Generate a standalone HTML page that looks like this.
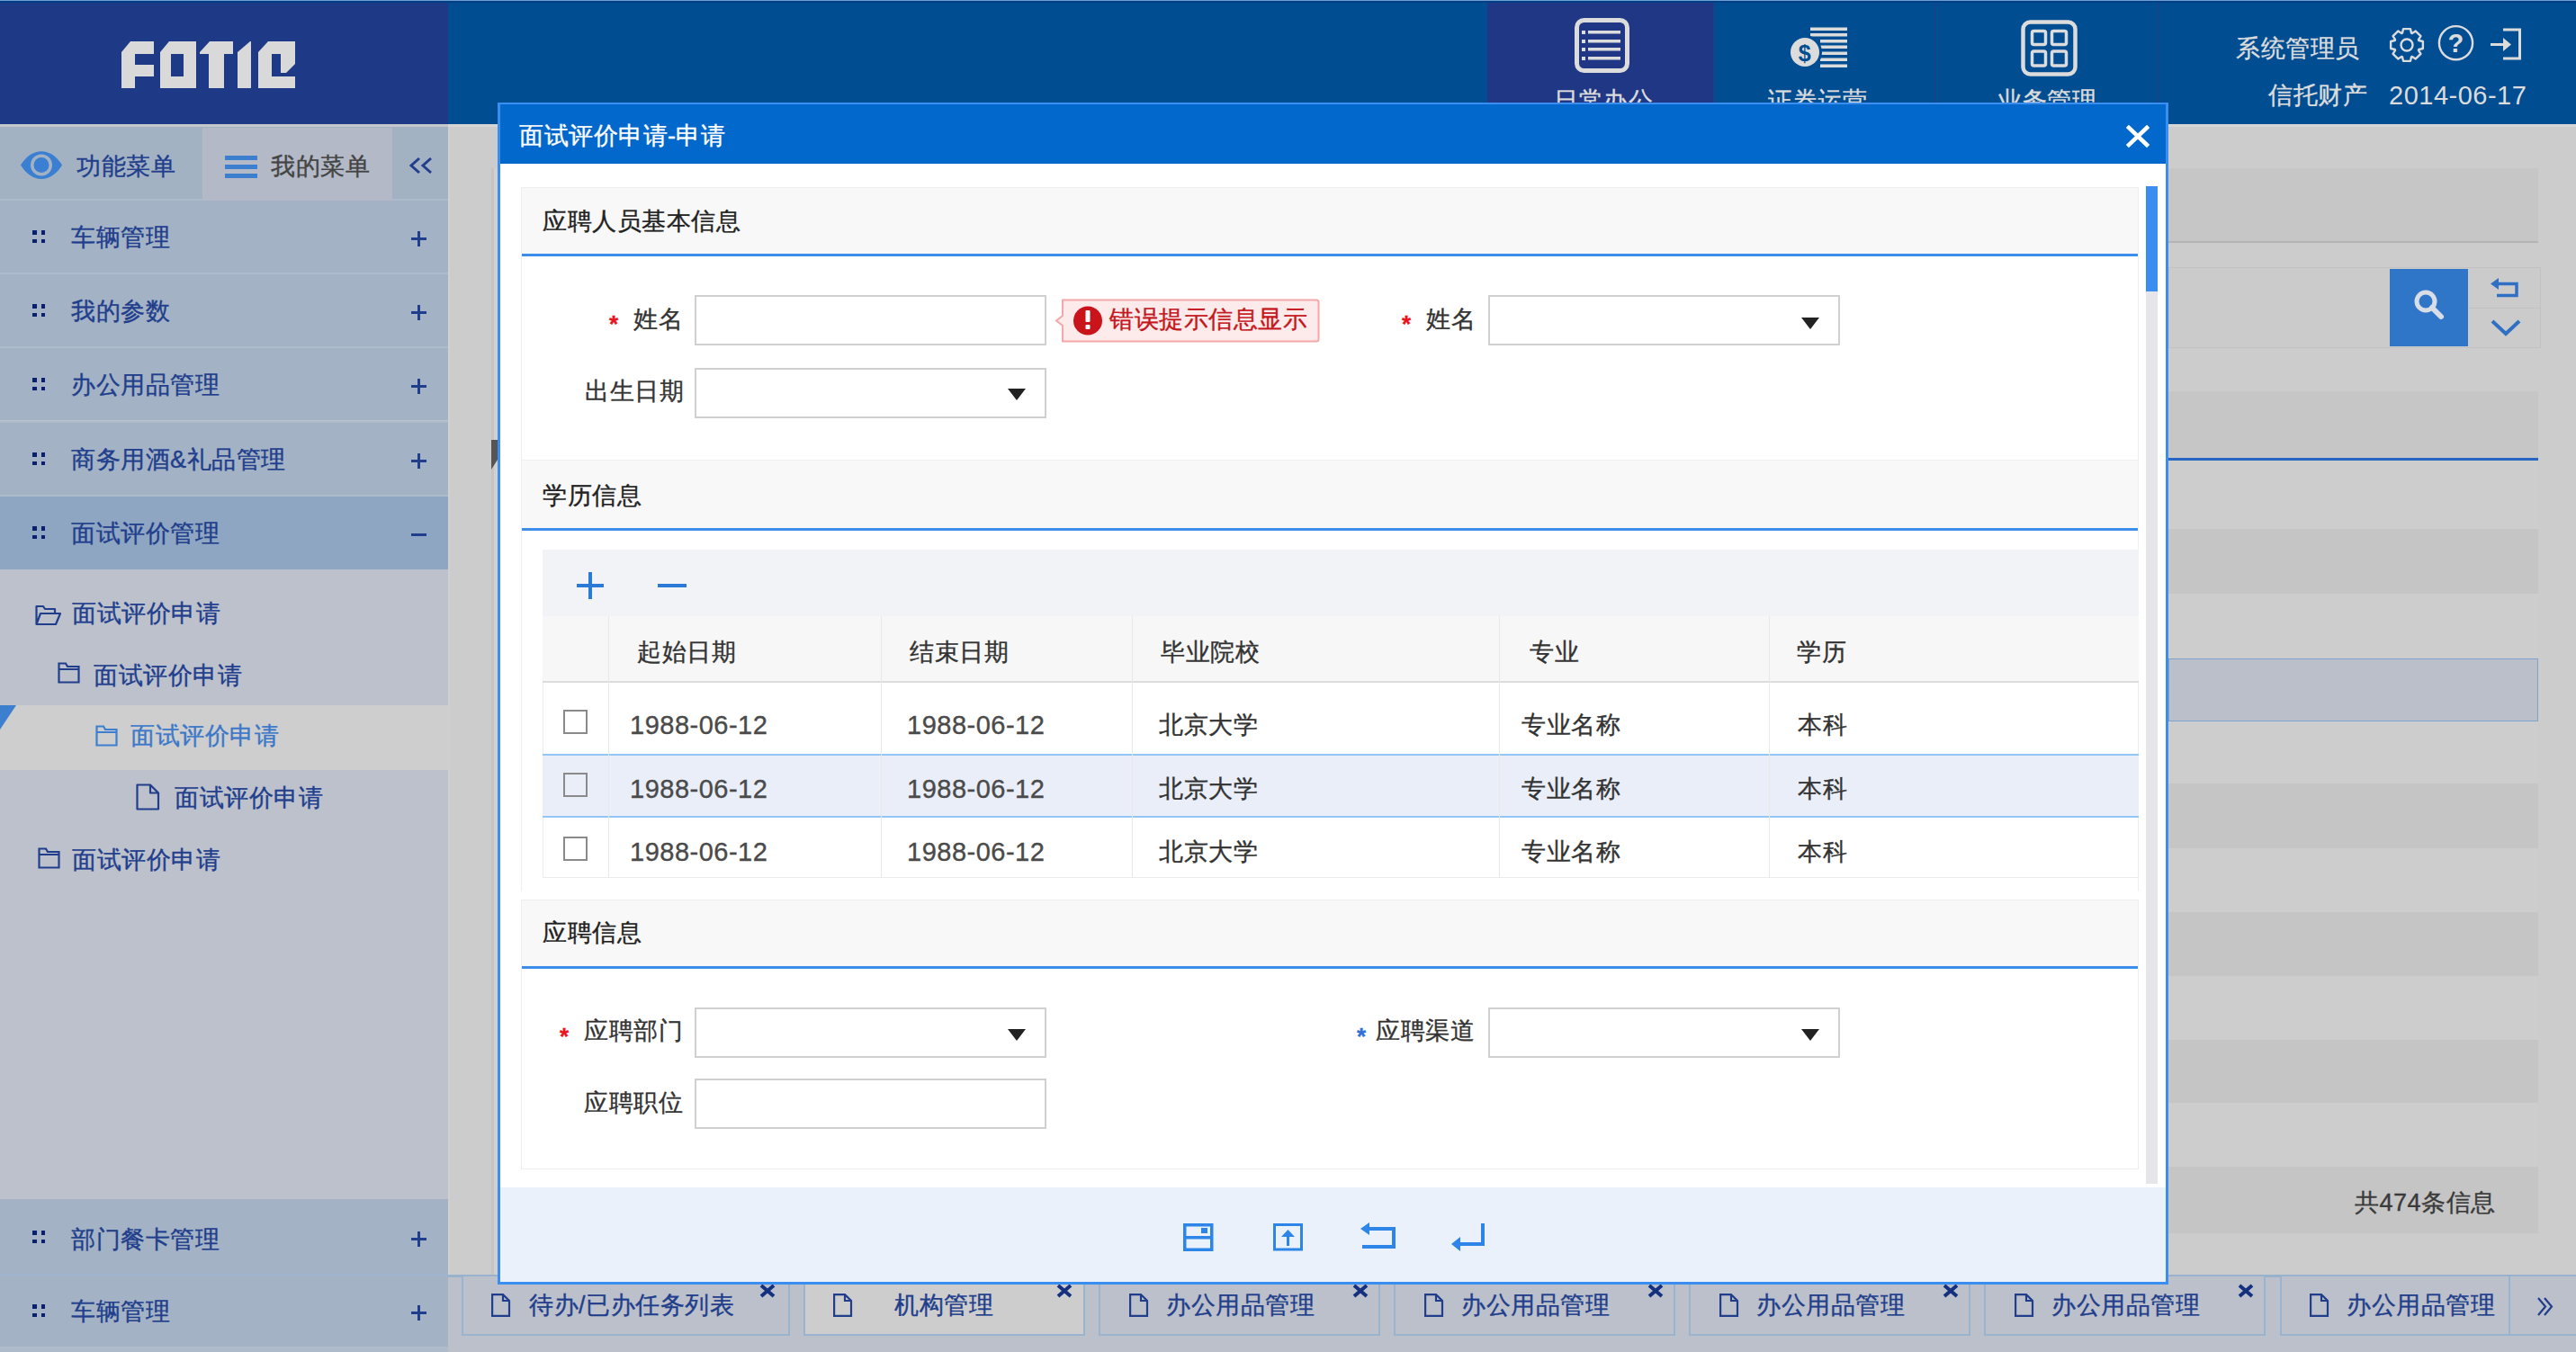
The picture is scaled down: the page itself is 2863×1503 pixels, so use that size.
<!DOCTYPE html>
<html><head><meta charset="utf-8">
<style>
*{margin:0;padding:0;box-sizing:border-box}
html,body{width:2863px;height:1503px;overflow:hidden;background:#cccccc;font-family:"Liberation Sans",sans-serif;letter-spacing:0.5px}
.a{position:absolute}
.t{position:absolute;white-space:nowrap;line-height:1;-webkit-text-stroke:0.35px currentColor}
.si,.mi .tx{-webkit-text-stroke:0.35px currentColor}
svg{position:absolute;overflow:visible}
/* header */
#hdr{left:0;top:0;width:2863px;height:138px;background:#004d91}
#logo{left:0;top:0;width:498px;height:138px;background:#1e3a87}
.topl1{left:0;top:0;height:1px;width:2863px;background:#6f9fd0}
.topl2{left:0;top:1px;height:2px;width:2863px;background:#003f88}
.navact{left:1653px;top:3px;width:251px;height:135px;background:#1f3785}
.navsep{top:3px;width:1px;height:135px;background:#2b3c82}
.ht{color:#dcdcdc;font-size:27px}
/* sidebar */
#side{left:0;top:138px;width:498px;height:1365px;background:#bcc1cc}
.mi{position:absolute;left:0;width:498px;height:80px;background:#a3b2c4}
.mi .dots{position:absolute;left:36px;top:33px;width:14px;height:14px}
.mi .dots i{position:absolute;width:4.5px;height:4.5px;background:#0a1f6e}
.mi .tx{position:absolute;left:79px;top:28px;font-size:27px;color:#213e8c;line-height:1;white-space:nowrap}
.mi .pl{position:absolute;left:457px;top:34px;width:17px;height:17px}
.mi .pl:before{content:"";position:absolute;left:0;top:7.25px;width:17px;height:2.5px;background:#213e8c}
.mi .pl:after{content:"";position:absolute;left:7.25px;top:0;width:2.5px;height:17px;background:#213e8c}
.mi .mn:after{display:none}
.sep{position:absolute;left:0;width:498px;height:2px;background:#aebbcb}
.si{position:absolute;font-size:27px;color:#213e8c;line-height:1;white-space:nowrap}
.fl{font-size:27px;color:#333}
.dt{font-size:29px;color:#4a4a4a}
.inp{background:#fff;border:2px solid #d0d0d0}
.arr{width:0;height:0;border-left:10.5px solid transparent;border-right:10.5px solid transparent;border-top:13px solid #222}
.vs{top:685px;width:1px;height:291px;background:#e8e8e8}
.cb{width:27px;height:27px;border:2px solid #8a8a8a;background:transparent}
.tab{position:absolute;top:1419px;height:66px;border:2px solid #9ab3cf;border-top:none;background:#bcc0ca}
.tab .tx{position:absolute;font-size:27px;color:#213e8c;line-height:1;white-space:nowrap;top:21px}
</style></head><body>

<!-- HEADER -->
<div id="hdr" class="a"></div>
<div id="logo" class="a"></div>
<div class="a topl1"></div>
<div class="a topl2"></div>
<svg style="left:0;top:0" width="498" height="138" viewBox="0 0 498 138">
  <g fill="#d9d9d9">
    <!-- F -->
    <polygon points="135,58 145,46 171,46 171,60 150,60 150,72 171,72 171,85 150,85 150,98 135,98"/>
    <!-- O -->
    <path d="M178,58 L188,46 L218,46 L218,98 L178,98 Z M190,60 L190,85 L204,85 L204,60 Z" fill-rule="evenodd"/>
    <!-- T -->
    <polygon points="222,58 233,46 259,46 259,60 249,60 249,98 232,98 232,60 222,60"/>
    <!-- I -->
    <polygon points="264,58 278,46 279,46 279,98 264,98"/>
    <!-- C -->
    <path d="M287,58 L298,46 L328,46 L328,71 L318,81 L312,81 L312,60 L302,60 L302,85 L328,85 L328,98 L287,98 Z"/>
  </g>
</svg>
<div class="a navact"></div>
<div class="a navsep" style="left:1904px"></div>
<div class="a navsep" style="left:2151px"></div>
<div class="a navsep" style="left:2398px"></div>

<!-- nav icons -->
<svg style="left:1740px;top:10px" width="80" height="80" viewBox="0 0 80 80">
  <rect x="12.5" y="12.5" width="56" height="56" rx="8" fill="none" stroke="#dcdcdc" stroke-width="5"/>
  <g fill="#dcdcdc">
    <rect x="18" y="24" width="4" height="4"/><rect x="25" y="24" width="36" height="3.5"/>
    <rect x="18" y="34" width="4" height="4"/><rect x="25" y="34" width="36" height="3.5"/>
    <rect x="18" y="43" width="4" height="4"/><rect x="25" y="43" width="36" height="3.5"/>
    <rect x="18" y="53" width="4" height="4"/><rect x="25" y="53" width="36" height="3.5"/>
  </g>
</svg>
<svg style="left:1985px;top:20px" width="80" height="70" viewBox="0 0 80 70">
  <g fill="#dcdcdc">
    <rect x="27" y="10.5" width="41" height="3.5"/>
    <rect x="27" y="17" width="41" height="3.5"/>
    <rect x="38" y="24" width="30" height="3.5"/>
    <rect x="38" y="30.5" width="30" height="3.5"/>
    <rect x="38" y="37.5" width="30" height="3.5"/>
    <rect x="38" y="44.5" width="30" height="3.5"/>
    <rect x="38" y="51.5" width="30" height="3.5"/>
    <circle cx="21" cy="38" r="19" fill="#004d91"/>
    <circle cx="21" cy="38" r="16"/>
  </g>
  <text x="21" y="47.5" font-size="25" font-weight="bold" text-anchor="middle" fill="#004d91" font-family="Liberation Sans">$</text>
</svg>
<svg style="left:2240px;top:16px" width="80" height="80" viewBox="0 0 80 80">
  <rect x="8.5" y="8.5" width="58" height="58" rx="8" fill="none" stroke="#dcdcdc" stroke-width="4.5"/>
  <g fill="none" stroke="#dcdcdc" stroke-width="3.5">
    <rect x="18.5" y="18.5" width="15" height="15" rx="2"/>
    <rect x="40.5" y="18.5" width="16" height="15" rx="2"/>
    <rect x="18.5" y="41" width="15" height="16" rx="2"/>
    <rect x="40.5" y="41" width="16" height="16" rx="2"/>
  </g>
</svg>
<div class="t ht" style="left:1727px;top:99px">日常办公</div>
<div class="t ht" style="left:1965px;top:99px">证券运营</div>
<div class="t ht" style="left:2220px;top:99px">业务管理</div>

<div class="t ht" style="left:2485px;top:41px">系统管理员</div>
<div class="t ht" style="left:2521px;top:93px">信托财产</div>
<div class="t ht" style="left:2655px;top:92px;font-size:29px;-webkit-text-stroke:0">2014-06-17</div>
<!-- gear -->
<svg style="left:2655px;top:30px" width="40" height="41" viewBox="0 0 40 41">
  <path d="M33.29,15.00 L37.86,16.01 L37.86,23.99 L33.29,25.00 L32.93,25.86 L35.45,29.80 L29.80,35.45 L25.86,32.93 L25.00,33.29 L23.99,37.86 L16.01,37.86 L15.00,33.29 L14.14,32.93 L10.20,35.45 L4.55,29.80 L7.07,25.86 L6.71,25.00 L2.14,23.99 L2.14,16.01 L6.71,15.00 L7.07,14.14 L4.55,10.20 L10.20,4.55 L14.14,7.07 L15.00,6.71 L16.01,2.14 L23.99,2.14 L25.00,6.71 L25.86,7.07 L29.80,4.55 L35.45,10.20 L32.93,14.14 Z" fill="none" stroke="#dcdcdc" stroke-width="2.4" stroke-linejoin="round"/>
  <circle cx="20" cy="20" r="6.5" fill="none" stroke="#dcdcdc" stroke-width="2.4"/>
</svg>
<svg style="left:2709px;top:27px" width="42" height="42" viewBox="0 0 42 42">
  <circle cx="20.5" cy="20.7" r="18.6" fill="none" stroke="#dcdcdc" stroke-width="2.4"/>
  <text x="20.5" y="31" font-size="29" font-weight="bold" text-anchor="middle" fill="#dcdcdc" font-family="Liberation Sans">?</text>
</svg>
<svg style="left:2767px;top:31px" width="40" height="37" viewBox="0 0 40 37">
  <path d="M15,2 L33.5,2 L33.5,34 L15,34" fill="none" stroke="#dcdcdc" stroke-width="3"/>
  <path d="M1,18.5 L18,18.5" stroke="#dcdcdc" stroke-width="3"/>
  <path d="M15,11 L24,18.5 L15,26 Z" fill="#dcdcdc"/>
</svg>

<!-- SIDEBAR -->
<div id="side" class="a"></div>
<div class="a" style="left:0;top:138px;width:498px;height:3px;background:#c4c7cc"></div>
<div class="a" style="left:0;top:141px;width:498px;height:82px;background:#a3b2c3"></div>
<div class="a" style="left:0;top:221px;width:498px;height:2px;background:#adbacb"></div>
<div class="a" style="left:225px;top:142px;width:211px;height:81px;background:#b3b9c6"></div>
<svg style="left:22px;top:168px" width="48" height="32" viewBox="0 0 48 32">
  <path d="M1,15.5 C13,-5 35,-5 47,15.5 C35,36 13,36 1,15.5 Z" fill="#3b7fd2"/>
  <circle cx="24" cy="15.5" r="12" fill="#a3b2c3"/>
  <circle cx="24" cy="15.5" r="8.5" fill="#3b7fd2"/>
</svg>
<div class="si" style="left:85px;top:172px">功能菜单</div>
<svg style="left:250px;top:173px" width="36" height="26" viewBox="0 0 36 26">
  <rect x="0" y="0" width="36" height="5" fill="#3d7fcf"/>
  <rect x="0" y="10" width="36" height="5" fill="#3d7fcf"/>
  <rect x="0" y="20" width="36" height="5" fill="#3d7fcf"/>
</svg>
<div class="si" style="left:301px;top:172px;color:#444">我的菜单</div>
<svg style="left:455px;top:175px" width="26" height="18" viewBox="0 0 26 18">
  <path d="M11,1 L2,9 L11,17 M24,1 L15,9 L24,17" fill="none" stroke="#213e8c" stroke-width="3"/>
</svg>

<!-- menu items -->
<div class="mi" style="top:223px"><div class="dots"><i style="left:0;top:0"></i><i style="left:9.5px;top:0"></i><i style="left:0;top:9.5px"></i><i style="left:9.5px;top:9.5px"></i></div><div class="tx">车辆管理</div><div class="pl"></div></div>
<div class="sep" style="top:303px"></div>
<div class="mi" style="top:305px"><div class="dots"><i style="left:0;top:0"></i><i style="left:9.5px;top:0"></i><i style="left:0;top:9.5px"></i><i style="left:9.5px;top:9.5px"></i></div><div class="tx">我的参数</div><div class="pl"></div></div>
<div class="sep" style="top:385px"></div>
<div class="mi" style="top:387px"><div class="dots"><i style="left:0;top:0"></i><i style="left:9.5px;top:0"></i><i style="left:0;top:9.5px"></i><i style="left:9.5px;top:9.5px"></i></div><div class="tx">办公用品管理</div><div class="pl"></div></div>
<div class="sep" style="top:468px"></div>
<div class="mi" style="top:470px"><div class="dots"><i style="left:0;top:0"></i><i style="left:9.5px;top:0"></i><i style="left:0;top:9.5px"></i><i style="left:9.5px;top:9.5px"></i></div><div class="tx">商务用酒&amp;礼品管理</div><div class="pl"></div></div>
<div class="sep" style="top:550px"></div>
<div class="mi" style="top:552px;height:81px;background:#8fa6c2"><div class="dots"><i style="left:0;top:0"></i><i style="left:9.5px;top:0"></i><i style="left:0;top:9.5px"></i><i style="left:9.5px;top:9.5px"></i></div><div class="tx">面试评价管理</div><div class="pl mn"></div></div>

<!-- sub items -->
<div class="a" style="left:0;top:784px;width:498px;height:72px;background:#cecece"></div>
<svg style="left:0;top:784px" width="20" height="28" viewBox="0 0 20 28"><polygon points="0,0 18,0 0,27" fill="#3d7fcf"/></svg>
<!-- open folder -->
<svg style="left:39px;top:672px" width="30" height="24" viewBox="0 0 30 24">
  <path d="M1.5,22 L1.5,2 L9,2 L11,5 L22,5 L22,9 M1.5,22 L6,10 L28,10 L23,22 Z" fill="none" stroke="#213e8c" stroke-width="2.2" stroke-linejoin="round"/>
</svg>
<div class="si" style="left:80px;top:669px">面试评价申请</div>
<svg style="left:64px;top:736px" width="26" height="24" viewBox="0 0 26 24">
  <path d="M1.5,22.5 L1.5,1.5 L9,1.5 L11,5 L23.5,5 L23.5,22.5 Z M1.5,8 L23.5,8" fill="none" stroke="#213e8c" stroke-width="2.2"/>
</svg>
<div class="si" style="left:104px;top:738px">面试评价申请</div>
<svg style="left:106px;top:806px" width="26" height="24" viewBox="0 0 26 24">
  <path d="M1.5,22.5 L1.5,1.5 L9,1.5 L11,5 L23.5,5 L23.5,22.5 Z M1.5,8 L23.5,8" fill="none" stroke="#3d7fcf" stroke-width="2.2"/>
</svg>
<div class="si" style="left:145px;top:805px;color:#3b78c9">面试评价申请</div>
<svg style="left:151px;top:871px" width="28" height="30" viewBox="0 0 28 30">
  <path d="M1.5,1.5 L16,1.5 L25,10.5 L25,28.5 L1.5,28.5 Z M16,1.5 L16,10.5 L25,10.5" fill="none" stroke="#213e8c" stroke-width="2.2" stroke-linejoin="round"/>
</svg>
<div class="si" style="left:194px;top:874px">面试评价申请</div>
<svg style="left:42px;top:942px" width="26" height="24" viewBox="0 0 26 24">
  <path d="M1.5,22.5 L1.5,1.5 L9,1.5 L11,5 L23.5,5 L23.5,22.5 Z M1.5,8 L23.5,8" fill="none" stroke="#213e8c" stroke-width="2.2"/>
</svg>
<div class="si" style="left:80px;top:943px">面试评价申请</div>

<div class="mi" style="top:1333px;height:83px"><div class="dots" style="top:35px"><i style="left:0;top:0"></i><i style="left:9.5px;top:0"></i><i style="left:0;top:9.5px"></i><i style="left:9.5px;top:9.5px"></i></div><div class="tx" style="top:32px">部门餐卡管理</div><div class="pl" style="top:36px"></div></div>
<div class="sep" style="top:1416px;background:#9fb4cf"></div>
<div class="mi" style="top:1418px;height:85px"><div class="dots" style="top:32px"><i style="left:0;top:0"></i><i style="left:9.5px;top:0"></i><i style="left:0;top:9.5px"></i><i style="left:9.5px;top:9.5px"></i></div><div class="tx" style="top:27px">车辆管理</div><div class="pl" style="top:33px"></div></div>

<div class="a" style="left:0;top:1497px;width:498px;height:6px;background:#aebbcb"></div>
<!--CONTENT-->
<div class="a" style="left:498px;top:141px;width:2px;height:1277px;background:#d0d0d0"></div>
<div class="a" style="left:498px;top:138px;width:2365px;height:3px;background:#d6d6d6"></div>
<div class="a" style="left:546px;top:187px;width:3px;height:1231px;background:#c4c4c6"></div><div class="a" style="left:549px;top:187px;width:5px;height:1231px;background:#d2d0cc"></div>
<svg style="left:546px;top:489px" width="8" height="34" viewBox="0 0 8 34"><polygon points="0,0 7,0 7,22 0,33" fill="#555"/></svg>
<div class="a" style="left:2410px;top:187px;width:411px;height:82px;background:#c6c6c6"></div>
<div class="a" style="left:2410px;top:268px;width:411px;height:2px;background:#b4b4b6"></div>
<div class="a" style="left:2410px;top:297px;width:414px;height:90px;background:#cbcbcc;border:1px solid #c2c2c4"></div>
<div class="a" style="left:2656px;top:299px;width:87px;height:86px;background:#2f76c8"></div>
<svg style="left:2680px;top:320px" width="40" height="44" viewBox="0 0 40 44">
  <circle cx="16" cy="15" r="10" fill="none" stroke="#d9dde5" stroke-width="5"/>
  <path d="M23,22 L33,32" stroke="#d9dde5" stroke-width="6" stroke-linecap="round"/>
</svg>
<div class="a" style="left:2743px;top:342px;width:80px;height:1px;background:#c2c2c4"></div>
<svg style="left:2765px;top:307px" width="40" height="30" viewBox="0 0 40 30">
  <path d="M12,8.5 L32,8.5 L32,21.5 L10,21.5" fill="none" stroke="#2f6fc4" stroke-width="3.5"/>
  <path d="M3,8.5 L12,2 L12,15 Z" fill="#2f6fc4"/>
</svg>
<svg style="left:2767px;top:354px" width="36" height="22" viewBox="0 0 36 22">
  <path d="M3,3 L18,17 L33,3" fill="none" stroke="#2f6fc4" stroke-width="4"/>
</svg>
<div class="a" style="left:2410px;top:435px;width:411px;height:74px;background:#c6c6c6"></div>
<div class="a" style="left:2410px;top:509px;width:411px;height:3px;background:#2565c4"></div>
<div class="a" style="left:2410px;top:512px;width:411px;height:76px;background:#cdcdcd"></div>
<div class="a" style="left:2410px;top:588px;width:411px;height:72px;background:#c5c5c5"></div>
<div class="a" style="left:2410px;top:660px;width:411px;height:72px;background:#cdcdcd"></div>
<div class="a" style="left:2410px;top:732px;width:411px;height:70px;background:#bbbfc9;border:1px solid #7ea3cf"></div>
<div class="a" style="left:2410px;top:802px;width:411px;height:69px;background:#cdcdcd"></div>
<div class="a" style="left:2410px;top:871px;width:411px;height:72px;background:#c5c5c5"></div>
<div class="a" style="left:2410px;top:943px;width:411px;height:71px;background:#cdcdcd"></div>
<div class="a" style="left:2410px;top:1014px;width:411px;height:71px;background:#c5c5c5"></div>
<div class="a" style="left:2410px;top:1085px;width:411px;height:71px;background:#cdcdcd"></div>
<div class="a" style="left:2410px;top:1156px;width:411px;height:70px;background:#c5c5c5"></div>
<div class="a" style="left:2410px;top:1226px;width:411px;height:71px;background:#cdcdcd"></div>
<div class="a" style="left:2410px;top:1297px;width:411px;height:74px;background:#c5c5c5"></div>
<div class="t" style="left:2617px;top:1324px;font-size:27px;color:#3a3a3a">共474条信息</div>


<!--TABS-->
<div class="a" style="left:498px;top:1418px;width:2365px;height:85px;background:#bcc0ca"></div>
<div class="a" style="left:498px;top:1417px;width:2365px;height:2.5px;background:#98b2cd"></div>
<div class="tab" style="left:513px;width:365px"></div><svg style="left:545px;top:1437px" width="24" height="28" viewBox="0 0 24 28"><path d="M2.1,2.1 L14,2.1 L21,9 L21,25.9 L2.1,25.9 Z M14,2.1 L14,9 L21,9" fill="none" stroke="#213e8c" stroke-width="2.2" stroke-linejoin="miter"/></svg><div class="t" style="left:588px;top:1438px;font-size:27px;color:#213e8c">待办/已办任务列表</div><svg style="left:844px;top:1427px" width="18" height="16" viewBox="0 0 18 16"><path d="M2,2 L16,14 M16,2 L2,14" stroke="#14307e" stroke-width="4"/></svg>
<div class="tab" style="left:893px;width:313px;background:#cdcdcd"></div><svg style="left:925px;top:1437px" width="24" height="28" viewBox="0 0 24 28"><path d="M2.1,2.1 L14,2.1 L21,9 L21,25.9 L2.1,25.9 Z M14,2.1 L14,9 L21,9" fill="none" stroke="#213e8c" stroke-width="2.2" stroke-linejoin="miter"/></svg><div class="t" style="left:994px;top:1438px;font-size:27px;color:#213e8c">机构管理</div><svg style="left:1174px;top:1427px" width="18" height="16" viewBox="0 0 18 16"><path d="M2,2 L16,14 M16,2 L2,14" stroke="#14307e" stroke-width="4"/></svg>
<div class="tab" style="left:1221px;width:313px"></div><svg style="left:1254px;top:1437px" width="24" height="28" viewBox="0 0 24 28"><path d="M2.1,2.1 L14,2.1 L21,9 L21,25.9 L2.1,25.9 Z M14,2.1 L14,9 L21,9" fill="none" stroke="#213e8c" stroke-width="2.2" stroke-linejoin="miter"/></svg><div class="t" style="left:1296px;top:1438px;font-size:27px;color:#213e8c">办公用品管理</div><svg style="left:1503px;top:1427px" width="18" height="16" viewBox="0 0 18 16"><path d="M2,2 L16,14 M16,2 L2,14" stroke="#14307e" stroke-width="4"/></svg>
<div class="tab" style="left:1549px;width:313px"></div><svg style="left:1582px;top:1437px" width="24" height="28" viewBox="0 0 24 28"><path d="M2.1,2.1 L14,2.1 L21,9 L21,25.9 L2.1,25.9 Z M14,2.1 L14,9 L21,9" fill="none" stroke="#213e8c" stroke-width="2.2" stroke-linejoin="miter"/></svg><div class="t" style="left:1624px;top:1438px;font-size:27px;color:#213e8c">办公用品管理</div><svg style="left:1831px;top:1427px" width="18" height="16" viewBox="0 0 18 16"><path d="M2,2 L16,14 M16,2 L2,14" stroke="#14307e" stroke-width="4"/></svg>
<div class="tab" style="left:1877px;width:313px"></div><svg style="left:1910px;top:1437px" width="24" height="28" viewBox="0 0 24 28"><path d="M2.1,2.1 L14,2.1 L21,9 L21,25.9 L2.1,25.9 Z M14,2.1 L14,9 L21,9" fill="none" stroke="#213e8c" stroke-width="2.2" stroke-linejoin="miter"/></svg><div class="t" style="left:1952px;top:1438px;font-size:27px;color:#213e8c">办公用品管理</div><svg style="left:2159px;top:1427px" width="18" height="16" viewBox="0 0 18 16"><path d="M2,2 L16,14 M16,2 L2,14" stroke="#14307e" stroke-width="4"/></svg>
<div class="tab" style="left:2205px;width:313px"></div><svg style="left:2238px;top:1437px" width="24" height="28" viewBox="0 0 24 28"><path d="M2.1,2.1 L14,2.1 L21,9 L21,25.9 L2.1,25.9 Z M14,2.1 L14,9 L21,9" fill="none" stroke="#213e8c" stroke-width="2.2" stroke-linejoin="miter"/></svg><div class="t" style="left:2280px;top:1438px;font-size:27px;color:#213e8c">办公用品管理</div><svg style="left:2487px;top:1427px" width="18" height="16" viewBox="0 0 18 16"><path d="M2,2 L16,14 M16,2 L2,14" stroke="#14307e" stroke-width="4"/></svg>
<div class="tab" style="left:2534px;width:256px"></div><svg style="left:2566px;top:1437px" width="24" height="28" viewBox="0 0 24 28"><path d="M2.1,2.1 L14,2.1 L21,9 L21,25.9 L2.1,25.9 Z M14,2.1 L14,9 L21,9" fill="none" stroke="#213e8c" stroke-width="2.2" stroke-linejoin="miter"/></svg><div class="t" style="left:2608px;top:1438px;font-size:27px;color:#213e8c">办公用品管理</div>
<div class="tab" style="left:2788px;width:80px"></div><svg style="left:2818px;top:1440px" width="24" height="26" viewBox="0 0 24 26"><path d="M3,3 L11,12.5 L3,22 M10,3 L18,12.5 L10,22" fill="none" stroke="#213e8c" stroke-width="2.2"/></svg>
<!--MODAL-->
<div class="a" style="left:553px;top:114px;width:1857px;height:1314px;background:#3a8ef0"></div>
<div class="a" style="left:556px;top:116px;width:1851px;height:66px;background:#0368cc"></div>
<div class="t" style="left:577px;top:138px;font-size:27px;color:#fff">面试评价申请-申请</div>
<svg style="left:2363px;top:139px" width="26" height="25" viewBox="0 0 26 25">
  <path d="M3,3 L23,22 M23,3 L3,22" stroke="#fff" stroke-width="4.5" stroke-linecap="square"/>
</svg>
<div class="a" style="left:556px;top:182px;width:1851px;height:1138px;background:#fff"></div>
<div class="a" style="left:556px;top:1320px;width:1851px;height:105px;background:#eaf1fa"></div>
<!-- scrollbar -->
<div class="a" style="left:2385px;top:207px;width:13px;height:1109px;background:#e6e6ea"></div>
<div class="a" style="left:2385px;top:207px;width:13px;height:117px;background:#3a8ef0"></div>

<!-- section 1 -->
<div class="a" style="left:579px;top:208px;width:1798px;height:304px;border:1px solid #eeeeee;border-bottom:none"></div>
<div class="a" style="left:580px;top:209px;width:1796px;height:73px;background:#f8f8f8"></div>
<div class="a" style="left:580px;top:282px;width:1796px;height:2.5px;background:#3b8eea"></div>
<div class="t" style="left:603px;top:233px;font-size:27px;color:#222">应聘人员基本信息</div>

<div class="t" style="left:677px;top:347px;font-size:26px;font-weight:bold;color:#e8141e">*</div>
<div class="t fl" style="left:704px;top:342px">姓名</div>
<div class="a inp" style="left:772px;top:328px;width:391px;height:56px"></div>
<!-- error tip -->
<svg style="left:1172px;top:332px" width="298" height="50" viewBox="0 0 298 50">
  <path d="M9,1.5 L291,1.5 Q293.5,1.5 293.5,4 L293.5,45 Q293.5,47.5 291,47.5 L9,47.5 L9,30 L2,24.5 L9,19 Z" fill="#fdeaea" stroke="#f4a8a8" stroke-width="2"/>
  <circle cx="37" cy="24.5" r="16" fill="#c9141c"/>
  <rect x="34.5" y="13" width="5" height="13" rx="1" fill="#fff"/>
  <rect x="34.5" y="29" width="5" height="5" rx="1" fill="#fff"/>
</svg>
<div class="t" style="left:1233px;top:342px;font-size:27px;color:#c4161c">错误提示信息显示</div>

<div class="t" style="left:1558px;top:347px;font-size:26px;font-weight:bold;color:#e8141e">*</div>
<div class="t fl" style="left:1585px;top:342px">姓名</div>
<div class="a inp" style="left:1654px;top:328px;width:391px;height:56px"></div>
<div class="a arr" style="left:2002px;top:353px"></div>

<div class="t fl" style="left:650px;top:422px">出生日期</div>
<div class="a inp" style="left:772px;top:409px;width:391px;height:56px"></div>
<div class="a arr" style="left:1120px;top:432px"></div>

<!-- section 2 -->
<div class="a" style="left:579px;top:511px;width:1798px;height:480px;border:1px solid #f0f0f0;border-bottom:none"></div>
<div class="a" style="left:580px;top:512px;width:1796px;height:75px;background:#f8f8f8"></div>
<div class="a" style="left:580px;top:587px;width:1796px;height:2.5px;background:#3b8eea"></div>
<div class="t" style="left:603px;top:538px;font-size:27px;color:#222">学历信息</div>

<div class="a" style="left:603px;top:611px;width:1774px;height:74px;background:#f2f3f7"></div>
<div class="a" style="left:641px;top:649px;width:30px;height:4px;background:#2a7ad6"></div>
<div class="a" style="left:654px;top:636px;width:4px;height:30px;background:#2a7ad6"></div>
<div class="a" style="left:731px;top:649px;width:32px;height:4px;background:#2a7ad6"></div>

<div class="a" style="left:603px;top:685px;width:1774px;height:72px;background:#f7f7f7"></div>
<div class="a" style="left:603px;top:757px;width:1774px;height:2px;background:#dcdcdc"></div>
<div class="a" style="left:603px;top:759px;width:1774px;height:217px;background:#fff;border:1px solid #ececec;border-top:none"></div>
<div class="a" style="left:603px;top:838px;width:1774px;height:71px;background:#e9eef9;border-top:2px solid #93c5f6;border-bottom:2px solid #93c5f6"></div>
<div class="a vs" style="left:676px"></div>
<div class="a vs" style="left:979px"></div>
<div class="a vs" style="left:1258px"></div>
<div class="a vs" style="left:1666px"></div>
<div class="a vs" style="left:1966px"></div>

<div class="t fl" style="left:708px;top:712px">起始日期</div>
<div class="t fl" style="left:1011px;top:712px">结束日期</div>
<div class="t fl" style="left:1290px;top:712px">毕业院校</div>
<div class="t fl" style="left:1700px;top:712px">专业</div>
<div class="t fl" style="left:1997px;top:712px">学历</div>

<div class="a cb" style="left:626px;top:789px"></div>
<div class="t dt" style="left:700px;top:792px">1988-06-12</div>
<div class="t dt" style="left:1008px;top:792px">1988-06-12</div>
<div class="t fl" style="left:1288px;top:793px">北京大学</div>
<div class="t fl" style="left:1691px;top:793px">专业名称</div>
<div class="t fl" style="left:1998px;top:793px">本科</div>

<div class="a cb" style="left:626px;top:859px"></div>
<div class="t dt" style="left:700px;top:863px">1988-06-12</div>
<div class="t dt" style="left:1008px;top:863px">1988-06-12</div>
<div class="t fl" style="left:1288px;top:864px">北京大学</div>
<div class="t fl" style="left:1691px;top:864px">专业名称</div>
<div class="t fl" style="left:1998px;top:864px">本科</div>

<div class="a cb" style="left:626px;top:930px"></div>
<div class="t dt" style="left:700px;top:933px">1988-06-12</div>
<div class="t dt" style="left:1008px;top:933px">1988-06-12</div>
<div class="t fl" style="left:1288px;top:934px">北京大学</div>
<div class="t fl" style="left:1691px;top:934px">专业名称</div>
<div class="t fl" style="left:1998px;top:934px">本科</div>

<!-- section 3 -->
<div class="a" style="left:579px;top:1000px;width:1798px;height:300px;border:1px solid #eeeeee"></div>
<div class="a" style="left:580px;top:1001px;width:1796px;height:73px;background:#f8f8f8"></div>
<div class="a" style="left:580px;top:1074px;width:1796px;height:2.5px;background:#3b8eea"></div>
<div class="t" style="left:603px;top:1024px;font-size:27px;color:#222">应聘信息</div>

<div class="t" style="left:622px;top:1139px;font-size:26px;font-weight:bold;color:#e8141e">*</div>
<div class="t fl" style="left:649px;top:1133px">应聘部门</div>
<div class="a inp" style="left:772px;top:1120px;width:391px;height:56px"></div>
<div class="a arr" style="left:1120px;top:1144px"></div>
<div class="t fl" style="left:649px;top:1213px">应聘职位</div>
<div class="a inp" style="left:772px;top:1199px;width:391px;height:56px"></div>

<div class="t" style="left:1508px;top:1139px;font-size:26px;font-weight:bold;color:#2f6fd6">*</div>
<div class="t fl" style="left:1529px;top:1133px">应聘渠道</div>
<div class="a inp" style="left:1654px;top:1120px;width:391px;height:56px"></div>
<div class="a arr" style="left:2002px;top:1144px"></div>

<!-- footer icons -->
<svg style="left:1315px;top:1360px" width="34" height="32" viewBox="0 0 34 32">
  <rect x="1.75" y="1.75" width="30" height="27.5" fill="none" stroke="#2e85e8" stroke-width="3.5"/>
  <rect x="1.75" y="14" width="30" height="3.5" fill="#2e85e8"/>
  <rect x="20" y="5" width="7" height="6" fill="#2e85e8"/>
</svg>
<svg style="left:1415px;top:1360px" width="34" height="32" viewBox="0 0 34 32">
  <rect x="1.5" y="1.5" width="30" height="27.5" fill="none" stroke="#2e85e8" stroke-width="3"/>
  <path d="M16.5,25 L16.5,9" stroke="#2e85e8" stroke-width="3"/>
  <path d="M9,15 L16.5,7 L24,15 Z" fill="#2e85e8"/>
</svg>
<svg style="left:1511px;top:1358px" width="42" height="34" viewBox="0 0 42 34">
  <path d="M8,8 L38,8 L38,28 L3,28" fill="none" stroke="#2e85e8" stroke-width="4"/>
  <path d="M1,8 L11,1 L11,15 Z" fill="#2e85e8"/>
</svg>
<svg style="left:1611px;top:1358px" width="42" height="34" viewBox="0 0 42 34">
  <path d="M37,2 L37,25 L8,25" fill="none" stroke="#2e85e8" stroke-width="4"/>
  <path d="M2,25 L12,17 L12,33 Z" fill="#2e85e8"/>
</svg>



</body></html>
